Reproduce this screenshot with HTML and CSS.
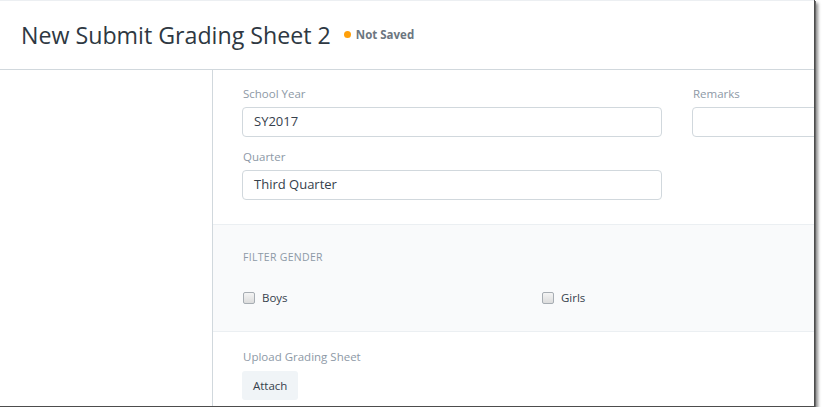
FILE: index.html
```html
<!DOCTYPE html>
<html lang="en">
<head>
<meta charset="utf-8">
<title>New Submit Grading Sheet 2</title>
<link rel="stylesheet" href="styles.css">
</head>
<body>
<div class="frame">
  <header class="page-head">
    <h1 class="title">New Submit Grading Sheet 2</h1>
    <span class="indicator">Not Saved</span>
  </header>
  <div class="layout">
    <aside class="sidebar"></aside>
    <main class="form">
      <section class="sec sec-first">
        <div class="col">
          <div class="field">
            <label class="lbl">School Year</label>
            <div class="input">SY2017</div>
          </div>
          <div class="field">
            <label class="lbl">Quarter</label>
            <div class="input">Third Quarter</div>
          </div>
        </div>
        <div class="col">
          <div class="field">
            <label class="lbl">Remarks</label>
            <div class="input"></div>
          </div>
        </div>
      </section>
      <section class="sec sec-alt">
        <div class="sec-head">FILTER GENDER</div>
        <div class="checks">
          <label class="check"><span class="box"></span>Boys</label>
          <label class="check"><span class="box"></span>Girls</label>
          <div></div>
        </div>
      </section>
      <section class="sec sec-last">
        <label class="lbl">Upload Grading Sheet</label>
        <button class="btn" type="button">Attach</button>
      </section>
    </main>
  </div>
</div>
</body>
</html>
```

FILE: styles.css
```css
html, body {
  margin: 0;
  padding: 0;
  background: #ffffff;
}

body {
  font-family: "Open Sans", "Noto Sans", sans-serif;
  color: #36414c;
}

.frame {
  width: 814px;
  height: 406px;
  overflow: hidden;
  background: #ffffff;
  border-right: 1px solid #4d4d4d;
  border-bottom: 1px solid #4d4d4d;
  box-shadow: 1px 1px 0 #6a6a6a, 3px 3px 3px rgba(0, 0, 0, 0.45);
}

.page-head {
  display: flex;
  align-items: center;
  height: 68px;
  border-top: 1px solid #eceff2;
  border-bottom: 1px solid #d1d8dd;
  padding-left: 21px;
}

.title {
  margin: 0;
  font-size: 23.2px;
  font-weight: 500;
  color: #2e3842;
}

.indicator {
  display: flex;
  align-items: center;
  margin-left: 13px;
  margin-top: -2px;
  font-size: 11.5px;
  font-weight: 700;
  color: #6c7680;
}

.indicator::before {
  content: "";
  width: 7px;
  height: 7px;
  border-radius: 50%;
  background: #ffa00a;
  margin-right: 5px;
}

.layout {
  display: flex;
  align-items: stretch;
  height: 400px;
}

.sidebar {
  flex: 0 0 212px;
  border-right: 1px solid #d1d8dd;
}

.form {
  flex: 0 0 930px;
}

.sec {
  padding: 0 29px;
  border-bottom: 1px solid #ebeff2;
}

.sec-first {
  display: grid;
  grid-template-columns: 420px 420px;
  column-gap: 30px;
  padding-top: 15px;
  padding-bottom: 13px;
}

.field {
  margin-bottom: 11px;
}

.lbl {
  display: block;
  font-size: 11.5px;
  line-height: 18px;
  color: #8d99a6;
  margin-bottom: 4px;
  padding-left: 1px;
}

.input {
  box-sizing: border-box;
  height: 30px;
  border: 1px solid #d1d8dd;
  border-radius: 4px;
  padding: 0 11px;
  font-size: 13px;
  line-height: 27px;
  color: #36414c;
}

.sec-alt {
  background: #f9fafb;
  padding-top: 23px;
  padding-bottom: 24px;
}

.sec-head {
  font-size: 10.5px;
  line-height: 18px;
  letter-spacing: 0.3px;
  color: #8d99a6;
  margin-bottom: 23px;
  padding-left: 1px;
}

.checks {
  display: grid;
  grid-template-columns: 299px 300px 300px;
  padding-left: 1px;
}

.check {
  display: flex;
  align-items: center;
  font-size: 11.5px;
  line-height: 18px;
  color: #36414c;
}

.box {
  box-sizing: border-box;
  width: 12px;
  height: 12px;
  border: 1px solid #a7adb3;
  border-radius: 2px;
  background: linear-gradient(#f4f4f4, #dcdcdc);
  margin-right: 7px;
}

.sec-last {
  border-bottom: none;
  padding-top: 16px;
}

.sec-last .lbl {
  margin-bottom: 5px;
}

.btn {
  display: block;
  height: 29px;
  padding: 0 11px;
  border: none;
  border-radius: 3px;
  background: #f0f4f7;
  font-family: inherit;
  font-size: 11.5px;
  color: #36414c;
}
```
